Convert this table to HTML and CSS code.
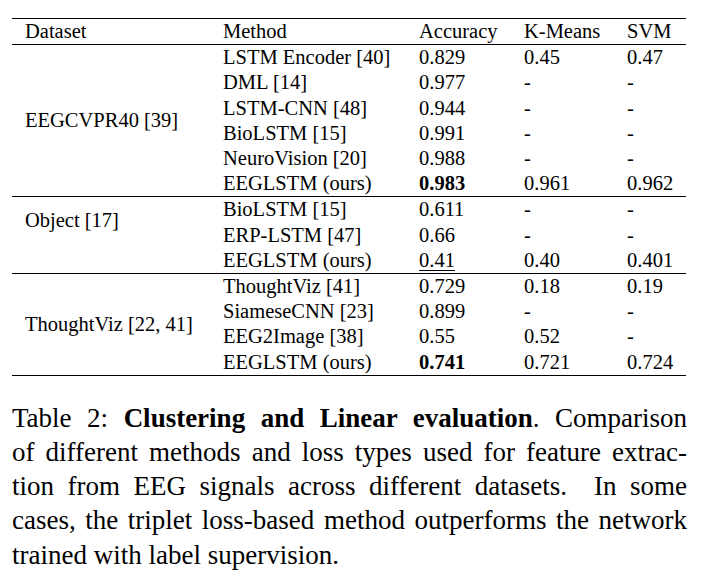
FILE: index.html
```html
<!DOCTYPE html>
<html>
<head>
<meta charset="utf-8">
<link rel="stylesheet" href="styles.css">
</head>
<body>
<div class="page">
  <table class="results">
    <colgroup>
      <col class="c-ds"><col class="c-m"><col class="c-acc"><col class="c-km"><col class="c-svm">
    </colgroup>
    <thead>
      <tr><th class="ds">Dataset</th><th>Method</th><th>Accuracy</th><th>K-Means</th><th>SVM</th></tr>
    </thead>
    <tbody>
      <tr><td class="ds" rowspan="6">EEGCVPR40 [39]</td><td>LSTM Encoder [40]</td><td>0.829</td><td>0.45</td><td>0.47</td></tr>
      <tr><td>DML [14]</td><td>0.977</td><td>-</td><td>-</td></tr>
      <tr><td>LSTM-CNN [48]</td><td>0.944</td><td>-</td><td>-</td></tr>
      <tr><td>BioLSTM [15]</td><td>0.991</td><td>-</td><td>-</td></tr>
      <tr><td>NeuroVision [20]</td><td>0.988</td><td>-</td><td>-</td></tr>
      <tr><td>EEGLSTM (ours)</td><td><b>0.983</b></td><td>0.961</td><td>0.962</td></tr>
    </tbody>
    <tbody>
      <tr><td class="ds ds-top" rowspan="3">Object [17]</td><td>BioLSTM [15]</td><td>0.611</td><td>-</td><td>-</td></tr>
      <tr><td>ERP-LSTM [47]</td><td>0.66</td><td>-</td><td>-</td></tr>
      <tr><td>EEGLSTM (ours)</td><td><span class="ul">0.41</span></td><td>0.40</td><td>0.401</td></tr>
    </tbody>
    <tbody>
      <tr><td class="ds" rowspan="4">ThoughtViz [22, 41]</td><td>ThoughtViz [41]</td><td>0.729</td><td>0.18</td><td>0.19</td></tr>
      <tr><td>SiameseCNN [23]</td><td>0.899</td><td>-</td><td>-</td></tr>
      <tr><td>EEG2Image [38]</td><td>0.55</td><td>0.52</td><td>-</td></tr>
      <tr><td>EEGLSTM (ours)</td><td><b>0.741</b></td><td>0.721</td><td>0.724</td></tr>
    </tbody>
  </table>
  <p class="caption">
    <span class="ln">Table 2: <b>Clustering and Linear evaluation</b>. Comparison</span>
    <span class="ln">of different methods and loss types used for feature extrac-</span>
    <span class="ln">tion from EEG signals across different datasets.&nbsp; In some</span>
    <span class="ln">cases, the triplet loss-based method outperforms the network</span>
    <span class="ln last">trained with label supervision.</span>
  </p>
</div>
</body>
</html>
```

FILE: styles.css
```css
html, body {
  margin: 0;
  padding: 0;
  background: #fff;
}
body {
  font-family: "Liberation Serif", "Times New Roman", serif;
  color: #000;
}
.page {
  width: 704px;
  padding-top: 18px;
  padding-left: 12px;
  box-sizing: border-box;
}
.results {
  border-collapse: collapse;
  table-layout: fixed;
  width: 674px;
  font-size: 20.5px;
  border-top: 1px solid #000;
  border-bottom: 1px solid #000;
}
.c-ds { width: 211px; }
.c-m { width: 196px; }
.c-acc { width: 105px; }
.c-km { width: 103px; }
.c-svm { width: 59px; }
.results th,
.results td {
  padding: 0;
  height: 25.2px;
  line-height: 25.2px;
  text-align: left;
  font-weight: normal;
  white-space: nowrap;
  vertical-align: middle;
}
.results thead tr {
  border-bottom: 1px solid #000;
}
.results tbody + tbody {
  border-top: 1px solid #000;
}
.results .ds {
  padding-left: 13px;
}
.results .ds-top {
  vertical-align: top;
  padding-top: 11px;
}
.results b {
  font-weight: bold;
}
.ul {
  text-decoration: underline;
  text-decoration-thickness: 1px;
  text-underline-offset: 3px;
}
.caption {
  margin: 25px 0 0 0;
  width: 675px;
  font-size: 27px;
  line-height: 34.2px;
}
.caption .ln {
  display: block;
  text-align: justify;
  text-align-last: justify;
}
.caption .ln.last {
  text-align-last: left;
}
```
